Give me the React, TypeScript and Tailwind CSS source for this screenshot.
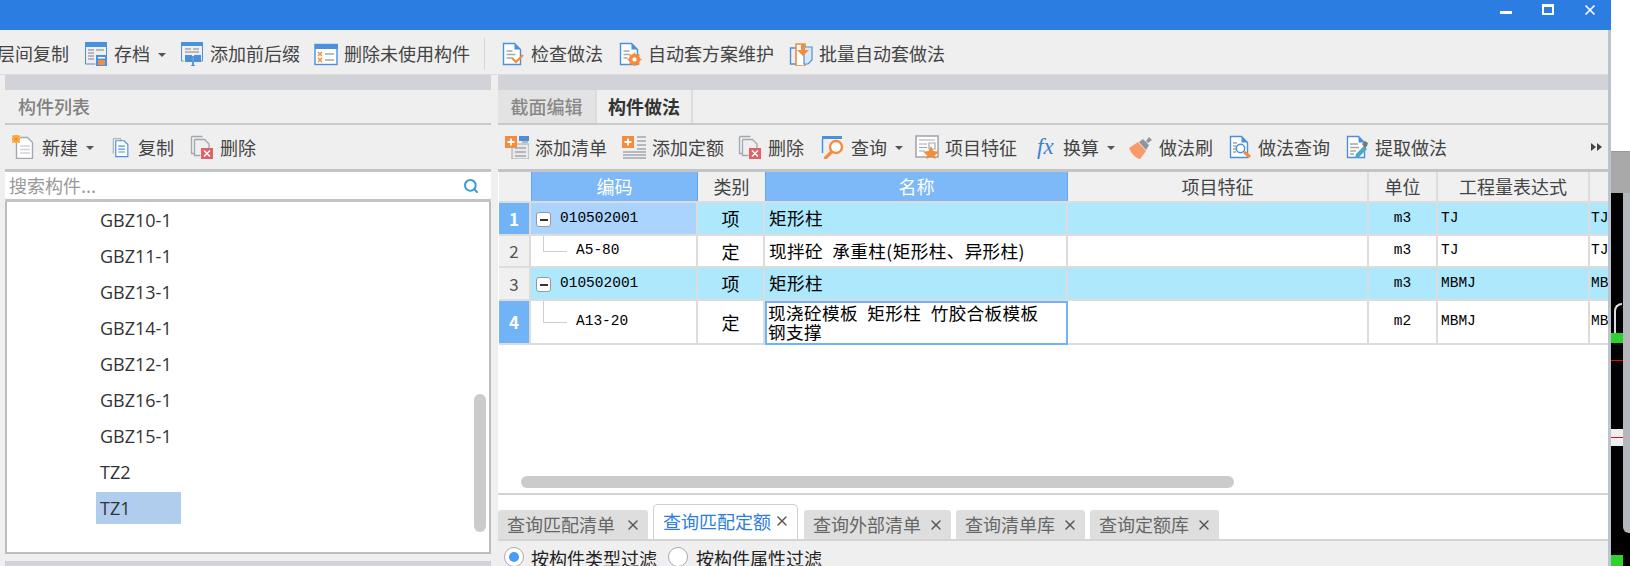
import { Search, X } from "lucide-react";
import type { ReactNode } from "react";

const BLUE = "#4a90dc";
const GRAY = "#a3a8ad";
const ORANGE = "#f58b3c";

const Ico = ({ w = 24, children }: { w?: number; children: ReactNode }) => (
  <svg width={w} height={24} viewBox="0 0 24 24" fill="none" className="shrink-0">
    {children}
  </svg>
);

const IconSave = () => (
  <Ico>
    <path d="M1 0h22v5H1z" fill={BLUE} />
    <path d="M1.5 5v17h10M22.5 5v8" stroke={BLUE} />
    <path d="M4 8h6M4 11h6M4 14h6M4 17h6M12 8h8" stroke={GRAY} strokeWidth="1.6" />
    <path d="M12 13h11v11H12z" fill={BLUE} />
    <path d="M14 18h7v5h-7z" fill={ORANGE} />
    <path d="M14 15h7v1.5h-7z" fill="#fff" />
  </Ico>
);
const IconPrefix = () => (
  <Ico>
    <path d="M1 0h22v4H1z" fill={BLUE} />
    <path d="M1.5 4v15h2M22.5 4v15h-2" stroke={BLUE} />
    <path d="M5 7h6M13 7h6M5 10h14" stroke={GRAY} strokeWidth="1.5" />
    <path d="M5 13h7v7H5zM14 13h7v7h-7z" fill={BLUE} />
    <path d="M11 24h4M13 14v10" stroke="#3d7fc9" strokeWidth="1.5" />
  </Ico>
);
const IconUnused = () => (
  <Ico>
    <rect x="1" y="2.5" width="22" height="20" fill="#fff" stroke={BLUE} strokeWidth="1.4" />
    <path d="M1 2h23v5H1z" fill={BLUE} />
    <path d="M4 10l4 4M8 10l-4 4M4 16l4 4M8 16l-4 4" stroke={ORANGE} strokeWidth="1.4" />
    <path d="M11 12h9M11 18h9" stroke={GRAY} strokeWidth="1.6" />
  </Ico>
);
const IconDoc = ({ extra, color = BLUE }: { extra?: ReactNode; color?: string }) => (
  <Ico>
    <path d="M2.5 1.5h11l6 6v15h-17z" fill="#fff" stroke={color} strokeWidth="1.4" />
    <path d="M13.5 1.5v6h6z" fill={color} />
    {extra}
  </Ico>
);
const IconCheck = () => (
  <IconDoc
    extra={
      <>
        <path d="M5.5 9h6M5.5 12.5h9M5.5 16h6" stroke={GRAY} strokeWidth="1.5" />
        <path d="M11 16l4 4 7-7" stroke={ORANGE} strokeWidth="2" />
      </>
    }
  />
);
const IconAuto = () => (
  <IconDoc
    extra={
      <>
        <path d="M5.5 9h6M5.5 12.5h6M5.5 16h4" stroke={GRAY} strokeWidth="1.5" />
        <circle cx="16.5" cy="17.5" r="4.2" stroke={ORANGE} strokeWidth="3" />
        <path d="M16.5 10.5v14M9.5 17.5h14M11.5 12.5l10 10M21.5 12.5l-10 10" stroke={ORANGE} strokeWidth="1.5" />
        <circle cx="16.5" cy="17.5" r="2" fill="#fff" />
      </>
    }
  />
);
const IconBatch = () => (
  <Ico>
    <path d="M1.5 6h6v16h-6z" stroke={BLUE} strokeWidth="1.4" />
    <path d="M7 2h9v22H7z" fill="#fff" stroke={ORANGE} strokeWidth="1.6" />
    <path d="M15 5h8v13l-4 4h-4z" fill="#dbe9f8" stroke={BLUE} strokeWidth="1.2" />
    <path d="M12 2h4v6h4l-6 6-6-6h4z" fill={ORANGE} />
  </Ico>
);
const IconNew = () => (
  <Ico>
    <path d="M4.5 2.5h11l5 5v16h-16z" fill="#fff" stroke={GRAY} strokeWidth="1.4" />
    <path d="M8 11h10M8 14.5h10M8 18h10" stroke="#d4d4d4" strokeWidth="1.3" />
    <path d="M0 0h8v8H0z" fill="#fbbf5c" />
    <path d="M4 0v8M0 4h8M1 1l6 6M7 1l-6 6" stroke="#f08a24" strokeWidth="1" />
  </Ico>
);
const IconCopy = () => (
  <Ico w={20}>
    <path d="M1.5 2h9v3M1.5 2v18" stroke={GRAY} strokeWidth="1.2" />
    <path d="M4.5 4.5h10l4.5 4.5v14.5H4.5z" fill="#fff" stroke={BLUE} strokeWidth="1.4" />
    <path d="M7.5 11h8M7.5 14.5h8M7.5 18h8" stroke={BLUE} strokeWidth="1.4" />
  </Ico>
);
const IconDelete = () => (
  <Ico>
    <path d="M1.5 1.5h11M1.5 1.5v17h3" stroke={GRAY} strokeWidth="1.3" />
    <path d="M4.5 4.5h10l4.5 4.5v6M4.5 4.5v16h6" stroke={GRAY} strokeWidth="1.3" />
    <path d="M11 13h12v11H11z" fill="#e0616a" />
    <path d="M14 15.5l6 6M20 15.5l-6 6" stroke="#fff" strokeWidth="1.5" />
  </Ico>
);
const IconAddList = () => (
  <Ico>
    <path d="M14 1h10v5H14z" fill={BLUE} />
    <path d="M7 9h17v15H7z" fill="#e9e9e9" stroke={GRAY} />
    <path d="M10 13h11M10 17h11M10 21h11M17 7h6" stroke={GRAY} strokeWidth="1.3" />
    <path d="M0 1h12v12H0z" fill={ORANGE} />
    <path d="M6 3.5v7M2.5 7h7" stroke="#fff" strokeWidth="1.8" />
  </Ico>
);
const IconAddQuota = () => (
  <Ico>
    <path d="M0 1h12v12H0z" fill={ORANGE} />
    <path d="M6 3.5v7M2.5 7h7" stroke="#fff" strokeWidth="1.8" />
    <path d="M15 2h9M15 6h9M15 10h9M15 14h9M1 17h23M1 20h23M1 23h23" stroke={GRAY} strokeWidth="1.3" />
  </Ico>
);
const IconQuery = () => (
  <Ico>
    <path d="M1 1h20v3H1z" fill={BLUE} />
    <path d="M1.5 4v14" stroke={BLUE} strokeWidth="1.5" />
    <circle cx="15" cy="12" r="6" fill="#fff" stroke={ORANGE} strokeWidth="2.4" />
    <path d="M10.5 17l-6 6" stroke={ORANGE} strokeWidth="3.2" strokeLinecap="round" />
  </Ico>
);
const IconFeature = () => (
  <Ico>
    <rect x="1" y="1" width="22" height="21" fill="#fff" stroke={GRAY} strokeWidth="1.6" />
    <path d="M4 5h16M4 9h8M4 12.5h8M4 16h6M14 8h6v6h-6z" stroke={GRAY} strokeWidth="1.2" />
    <path d="M16 11l2.4 5 5.4.7-4 3.7 1 3.6-4.8-2.200-4.800 2.200 1-3.600-4-3.700 5.400-.7z" fill={ORANGE} />
  </Ico>
);
const IconBrush = () => (
  <Ico>
    <path d="M0 13l9-6 8 9-6 8c-5-1-9-6-11-11z" fill="#fa9a66" />
    <path d="M10 7l4-3 6 6-3 5zM17 6l3-4 3 3-4 3z" fill="#8f959a" />
  </Ico>
);
const IconFind = () => (
  <IconDoc
    extra={
      <>
        <path d="M5 8h4M5 11h3M5 14h3M5 17h3" stroke={GRAY} strokeWidth="1.3" />
        <circle cx="12.5" cy="13.5" r="4.2" stroke={BLUE} strokeWidth="1.5" fill="#fff" />
        <path d="M16 17l6 5" stroke={ORANGE} strokeWidth="3" />
      </>
    }
  />
);
const IconExtract = () => (
  <IconDoc
    extra={
      <>
        <path d="M5 9h8M5 12.5h9M5 16h6M5 19h4" stroke={GRAY} strokeWidth="1.4" />
        <path d="M10 23l1-4 8-8 3 3-8 8z" fill="#47a8c9" />
        <path d="M17 9l3-3 3 2-1 3-2 2z" fill="#777" />
      </>
    }
  />
);

const Caret = ({ className = "ml-2" }: { className?: string }) => (
  <span className={`${className} mt-[2px] h-0 w-0 border-x-[4px] border-t-[4px] border-x-transparent border-t-[#555]`} />
);

const Tool = ({ icon, label, className = "", caret }: { icon: ReactNode; label: string; className?: string; caret?: boolean }) => (
  <div className={`flex shrink-0 items-center ${className}`}>
    {icon}
    <span className="ml-[6px] whitespace-nowrap">{label}</span>
    {caret && <Caret />}
  </div>
);

const listItems = ["GBZ10-1", "GBZ11-1", "GBZ13-1", "GBZ14-1", "GBZ12-1", "GBZ16-1", "GBZ15-1", "TZ2", "TZ1"];

const Latin = ({ children }: { children: ReactNode }) => (
  <span className="font-['Liberation_Mono',monospace] text-[14.5px] text-black">{children}</span>
);

const rows = [
  { n: "1", h: "h-[33px]", code: "010502001", kind: "项", name: "矩形柱", unit: "m3", expr: "TJ", tint: true, parent: true, active: true },
  { n: "2", h: "h-[32px]", code: "A5-80", kind: "定", name: "现拌砼 承重柱(矩形柱、异形柱)", unit: "m3", expr: "TJ", tint: false, parent: false, active: false },
  { n: "3", h: "h-[33px]", code: "010502001", kind: "项", name: "矩形柱", unit: "m3", expr: "MBMJ", tint: true, parent: true, active: false },
  { n: "4", h: "h-[44px]", code: "A13-20", kind: "定", name: "现浇砼模板 矩形柱 竹胶合板模板\n钢支撑", unit: "m2", expr: "MBMJ", tint: false, parent: false, active: true },
];

const COLS = "grid-cols-[32px_167px_67px_303px_301px_69px_152px_18px]";

const GridRow = ({ r }: { r: (typeof rows)[number] }) => {
  const base = "flex items-center overflow-hidden border-b-2 border-[#dcdcdc]";
  const cell = `${base} ${r.tint ? "bg-[#ade8fc]" : "bg-white"}`;
  const editing = r.n === "4";
  return (
    <div className={`grid ${COLS} ${r.h}`}>
      <div
        className={`flex items-center justify-center border-r-2 border-b-2 border-[#dcdcdc] text-[17px] ${
          r.active ? "bg-[#70b3f7] font-bold text-white" : "bg-[#f0f0f0] text-[#555]"
        }`}
      >
        {r.n}
      </div>
      <div className={`${r.n === "1" ? `${base} bg-[#aad4fe]` : cell} relative border-r-2 ${r.parent ? "pl-[29px]" : "pl-[45px]"}`}>
        {r.parent ? (
          <span className="absolute top-[9px] left-[5px] flex h-[15px] w-[15px] items-center justify-center rounded-[3px] border border-[#999] bg-white">
            <span className="h-[2px] w-2 bg-[#333]" />
          </span>
        ) : (
          <span className={`absolute top-0 left-[12px] w-6 border-b border-l border-[#cfcfcf] ${editing ? "h-[22px]" : "h-[16px]"}`} />
        )}
        <Latin>{r.code}</Latin>
      </div>
      <div className={`${cell} justify-center border-r-2 text-black`}>{r.kind}</div>
      {editing ? (
        <div className="overflow-hidden border-2 border-[#70b3f7] bg-white pl-[1px] text-[17.6px] leading-[19px] tracking-[0.4px] whitespace-pre-line text-black [word-spacing:5px]">
          {r.name}
        </div>
      ) : (
        <div className={`${cell} border-r-2 pl-1 text-[17.6px] tracking-[0.4px] whitespace-nowrap text-black [word-spacing:5px]`}>{r.name}</div>
      )}
      <div className={`${cell} border-r-2`} />
      <div className={`${cell} justify-center border-r-2`}>
        <Latin>{r.unit}</Latin>
      </div>
      <div className={`${cell} border-r-2 pl-[3px]`}>
        <Latin>{r.expr}</Latin>
      </div>
      <div className={`${cell} pl-[1px]`}>
        <Latin>{r.expr}</Latin>
      </div>
    </div>
  );
};

const bottomTabs = [
  { label: "查询匹配清单", cls: "w-[150px]" },
  { label: "查询匹配定额", cls: "w-[145px] ml-[5px]", active: true },
  { label: "查询外部清单", cls: "w-[147px] ml-[6px]" },
  { label: "查询清单库", cls: "w-[129px] ml-[5px]" },
  { label: "查询定额库", cls: "w-[129px] ml-[5px]" },
];

export default function App() {
  return (
    <div className="flex h-[566px] w-[1630px] overflow-hidden bg-black font-['Noto_Sans_CJK_SC',sans-serif] text-[18px] text-[#444]">
      <div className="flex h-full w-[1611px] shrink-0 flex-col bg-[#bcc3cf]">
        {/* title bar */}
        <div className="flex h-[30px] shrink-0 bg-[#2b7de1] text-white">
          <div className="flex flex-1 items-start justify-end pt-[2px] pr-[13px]">
            <span className="mt-[9px] mr-[30px] h-[3px] w-3 bg-white" />
            <span className="mt-[2px] mr-[28px] h-[11px] w-3 border-2 border-t-[3px] border-white" />
            <X size={16} strokeWidth={2.5} />
          </div>
        </div>

        {/* main toolbar */}
        <div className="flex h-[45px] w-[1608px] shrink-0 items-center overflow-hidden border-b border-[#dcdcdc] bg-[#efefef] pt-[3px]">
          <span className="-ml-[3px] whitespace-nowrap">层间复制</span>
          <Tool className="ml-[15px]" icon={<IconSave />} label="存档" caret />
          <Tool className="ml-[14px]" icon={<IconPrefix />} label="添加前后缀" />
          <Tool className="ml-[14px]" icon={<IconUnused />} label="删除未使用构件" />
          <span className="mx-[14px] h-8 w-px bg-[#d5d5d5]" />
          <Tool className="ml-[2px]" icon={<IconCheck />} label="检查做法" />
          <Tool className="ml-[15px]" icon={<IconAuto />} label="自动套方案维护" />
          <Tool className="ml-[15px]" icon={<IconBatch />} label="批量自动套做法" />
        </div>

        <div className="flex min-h-0 w-[1608px] flex-1 bg-[#efefef] pl-[5px]">
          {/* left panel */}
          <div className="flex w-[486px] shrink-0 flex-col">
            <div className="h-[15px] shrink-0 bg-[#d2d3d8]" />
            <div className="flex h-[35px] shrink-0 items-center border-b-2 border-[#c9c9c9] pl-[13px] font-medium text-[#808080]">
              构件列表
            </div>
            <div className="flex h-[47px] shrink-0 items-center border-b-3 border-[#c4c4c4] pl-[7px]">
              <Tool icon={<IconNew />} label="新建" caret />
              <Tool className="ml-[18px]" icon={<IconCopy />} label="复制" />
              <Tool className="ml-[16px]" icon={<IconDelete />} label="删除" />
            </div>
            <div className="flex h-[30px] shrink-0 items-center justify-between border-b-3 border-[#c4c4c4] bg-white pr-[12px] pl-[4px] text-[#999]">
              <span>搜索构件...</span>
              <Search size={16} strokeWidth={3} className="text-[#3a9bd6]" />
            </div>
            <div className="relative h-[352px] shrink-0 border-x-2 border-b-2 border-[#bdbdbd] bg-white pl-[89px] font-['Open_Sans',sans-serif] text-[#333]">
              {listItems.map((name) => (
                <div key={name} className="flex h-[36px] items-center">
                  <span className={`flex h-[32px] w-[85px] items-center pl-[4px] ${name === "TZ1" ? "bg-[#b1cdee]" : ""}`}>{name}</span>
                </div>
              ))}
              <span className="absolute top-[192px] right-[3px] h-[138px] w-3 rounded-md bg-[#cbcbcb]" />
            </div>
            <div className="mt-[7px] flex-1 bg-[#d2d3d8]" />
          </div>

          {/* right panel */}
          <div className="ml-[7px] flex min-w-0 flex-1 flex-col">
            <div className="h-[15px] shrink-0 bg-[#d2d3d8]" />
            <div className="flex h-[35px] shrink-0 border-b-2 border-[#c9c9c9] font-medium">
              <div className="flex w-[97px] items-center justify-center bg-[#e3e3e3] text-[#888]">截面编辑</div>
              <div className="flex w-[98px] items-center justify-center border-x-2 border-[#dcdcdc] font-bold text-[#333]">
                构件做法
              </div>
            </div>
            <div className="flex h-[47px] shrink-0 items-center overflow-hidden border-b-3 border-[#c4c4c4] pl-[7px]">
              <Tool icon={<IconAddList />} label="添加清单" />
              <Tool className="ml-[15px]" icon={<IconAddQuota />} label="添加定额" />
              <Tool className="ml-[14px]" icon={<IconDelete />} label="删除" />
              <Tool className="ml-[17px]" icon={<IconQuery />} label="查询" caret />
              <Tool className="ml-[12px]" icon={<IconFeature />} label="项目特征" />
              <div className="ml-[20px] flex shrink-0 items-center">
                <span className="w-[22px] font-['Liberation_Serif',serif] text-[23px] text-[#3a7fd5] italic">fx</span>
                <span className="ml-[4px]">换算</span>
                <Caret />
              </div>
              <Tool className="ml-[14px]" icon={<IconBrush />} label="做法刷" />
              <Tool className="ml-[15px]" icon={<IconFind />} label="做法查询" />
              <Tool className="ml-[15px]" icon={<IconExtract />} label="提取做法" />
              <span className="mr-[6px] ml-auto flex shrink-0">
                <span className="h-0 w-0 border-y-[4px] border-l-[5px] border-y-transparent border-l-[#444]" />
                <span className="ml-[1px] h-0 w-0 border-y-[4px] border-l-[5px] border-y-transparent border-l-[#444]" />
              </span>
            </div>

            <div className="flex h-[369px] shrink-0 flex-col bg-white">
              <div className="flex h-[323px] shrink-0 flex-col border-b-2 border-[#d4d4d4] pl-[1px]">
                <div className={`grid ${COLS} h-[31px] shrink-0 border-b-2 border-[#dcdcdc]`}>
                  <div className="bg-[#f0f0f0]" />
                  <div className="flex items-center justify-center border-x border-[#62a6f0] bg-[#7db8f8] text-white">编码</div>
                  <div className="flex items-center justify-center bg-[#f0f0f0]">类别</div>
                  <div className="flex items-center justify-center border-x border-[#62a6f0] bg-[#7db8f8] text-white">名称</div>
                  <div className="flex items-center justify-center border-r-2 border-[#dcdcdc] bg-[#f0f0f0]">项目特征</div>
                  <div className="flex items-center justify-center border-r-2 border-[#dcdcdc] bg-[#f0f0f0]">单位</div>
                  <div className="flex items-center justify-center border-r-2 border-[#dcdcdc] bg-[#f0f0f0]">工程量表达式</div>
                  <div className="bg-[#f0f0f0]" />
                </div>
                {rows.map((r) => (
                  <GridRow key={r.n} r={r} />
                ))}
                <div className="flex flex-1 items-end pb-[5px] pl-[22px]">
                  <span className="h-3 w-[713px] rounded-md bg-[#cbcbcb]" />
                </div>
              </div>

              {/* bottom tabs */}
              <div className="flex h-[46px] shrink-0 items-end border-b-2 border-[#d4d4d4]">
                {bottomTabs.map((t) => (
                  <div
                    key={t.label}
                    className={`flex items-center justify-between pr-[7px] pl-[9px] ${t.cls} ${
                      t.active
                        ? "h-[35px] rounded-t-[5px] border-x border-t border-[#c8d0da] bg-white pb-[2px] text-[#2b7de1]"
                        : "h-[29px] rounded-t-[3px] bg-[#dedede] text-[#666]"
                    }`}
                  >
                    <span className="whitespace-nowrap">{t.label}</span>
                    <X size={16} strokeWidth={2} className="text-[#555]" />
                  </div>
                ))}
              </div>
            </div>

            {/* filter row */}
            <div className="flex flex-1 items-start overflow-hidden bg-[#efefef] pt-[6px] pl-[6px] text-[#222]">
              <span className="flex h-5 w-5 shrink-0 items-center justify-center rounded-full border border-[#aaa] bg-white">
                <span className="h-[10px] w-[10px] rounded-full bg-[#4a9bf5]" />
              </span>
              <span className="ml-[7px] leading-[22px] whitespace-nowrap">按构件类型过滤</span>
              <span className="ml-[11px] h-5 w-5 shrink-0 rounded-full border border-[#aaa] bg-white" />
              <span className="ml-[8px] leading-[22px] whitespace-nowrap">按构件属性过滤</span>
            </div>
          </div>
        </div>
      </div>

      {/* what shows of the desktop behind the window */}
      <div className="relative flex-1 bg-black">
        <div className="h-[152px] border-b border-[#999] bg-white" />
        <div className="h-[41px] bg-[#a9a9a9]" />
        <span className="absolute top-[333px] left-0 h-[10px] w-3 bg-[#2fd12f]" />
        <span className="absolute top-[303px] left-[3px] h-[30px] w-[8px] rounded-tl-full border-t-2 border-l-2 border-[#ddd]" />
        <span className="absolute top-[360px] left-0 h-px w-3 bg-[#e01010]" />
        <span className="absolute top-[429px] left-0 h-[17px] w-3 bg-[#eee]" />
        <span className="absolute top-[437px] left-0 h-px w-3 bg-[#e01010]" />
        <span className="absolute top-[555px] left-0 h-[11px] w-3 bg-[#2fd12f]" />
        <span className="absolute top-[193px] left-3 h-[340px] w-2 rounded-bl-md bg-[#b4b8bd]" />
      </div>
    </div>
  );
}
